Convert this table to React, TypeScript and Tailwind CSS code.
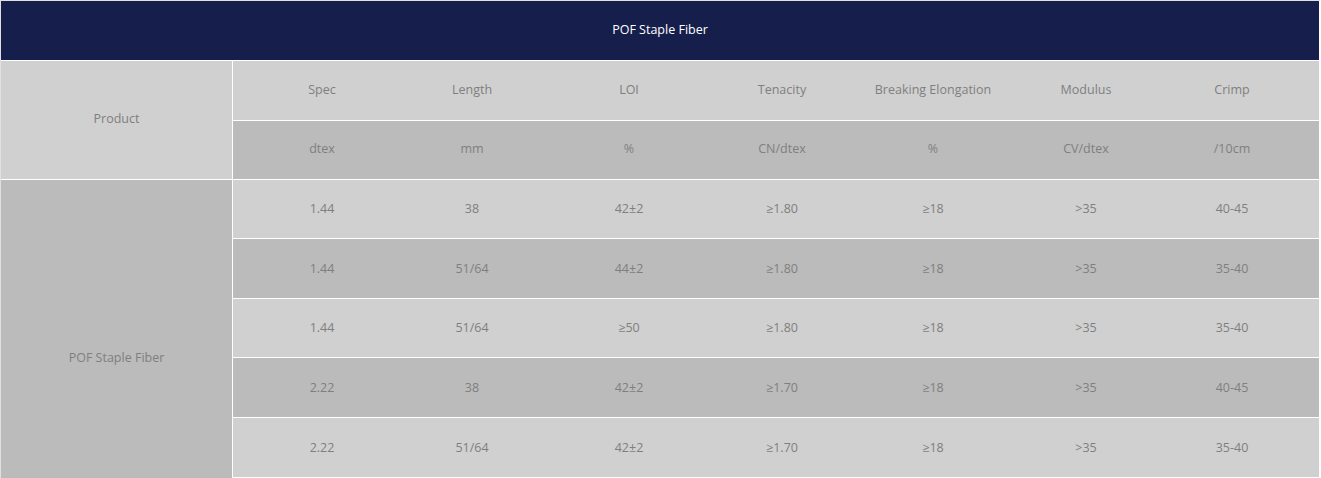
import React from 'react';

type Row = { cells: string[]; dark: boolean; h: string };

const colWidths = ['w-[178px]', 'w-[122px]', 'w-[192px]', 'w-[114px]', 'w-[188px]', 'w-[118px]', 'w-[174px]'];

const headRows: Row[] = [
  { cells: ['Spec', 'Length', 'LOI', 'Tenacity', 'Breaking Elongation', 'Modulus', 'Crimp'], dark: false, h: 'h-[59px]' },
  { cells: ['dtex', 'mm', '%', 'CN/dtex', '%', 'CV/dtex', '/10cm'], dark: true, h: 'h-[58px]' },
];

const dataRows: Row[] = [
  { cells: ['1.44', '38', '42±2', '≥1.80', '≥18', '>35', '40-45'], dark: false, h: 'h-[58px]' },
  { cells: ['1.44', '51/64', '44±2', '≥1.80', '≥18', '>35', '35-40'], dark: true, h: 'h-[59px]' },
  { cells: ['1.44', '51/64', '≥50', '≥1.80', '≥18', '>35', '35-40'], dark: false, h: 'h-[58px]' },
  { cells: ['2.22', '38', '42±2', '≥1.70', '≥18', '>35', '40-45'], dark: true, h: 'h-[59px]' },
  { cells: ['2.22', '51/64', '42±2', '≥1.70', '≥18', '>35', '35-40'], dark: false, h: 'h-[59px]' },
];

function SpecRow({ row, head }: { row: Row; head?: boolean }) {
  return (
    <div className={`flex ${row.h} ${row.dark ? 'bg-[#bbbbbb]' : 'bg-[#d0d0d0]'}`}>
      {row.cells.map((c, i) => (
        <div key={i} className={`${colWidths[i]} flex items-center justify-center ${head ? 'pb-px' : 'pt-px'}`}>
          {c}
        </div>
      ))}
    </div>
  );
}

export default function App() {
  return (
    <div
      className="w-[1321px] h-[478px] overflow-hidden bg-white text-[12.5px] text-[#7f7f7f]"
      style={{ fontFamily: '"Open Sans", "Noto Sans", sans-serif' }}
    >
      <div className="w-[1320px] border-t border-l border-[#e0e0e0] flex flex-col gap-px pb-px pr-px bg-white">
        {/* Title */}
        <div className="h-[59px] bg-[#161e4b] text-white flex items-center justify-center pb-px">
          POF Staple Fiber
        </div>

        <div className="flex gap-px items-start">
          {/* Product column - the rowspan cell runs on past the bottom of the view */}
          <div className="w-[231px] flex flex-col gap-px">
            <div className="h-[118px] bg-[#d0d0d0] flex items-center justify-center pb-px">Product</div>
            <div className="h-[357px] bg-[#bbbbbb] flex items-center justify-center">POF Staple Fiber</div>
          </div>

          {/* Spec columns */}
          <div className="w-[1086px] flex flex-col gap-px">
            {headRows.map((r, i) => (
              <SpecRow key={'h' + i} row={r} head />
            ))}
            {dataRows.map((r, i) => (
              <SpecRow key={'d' + i} row={r} />
            ))}
          </div>
        </div>
      </div>
    </div>
  );
}
